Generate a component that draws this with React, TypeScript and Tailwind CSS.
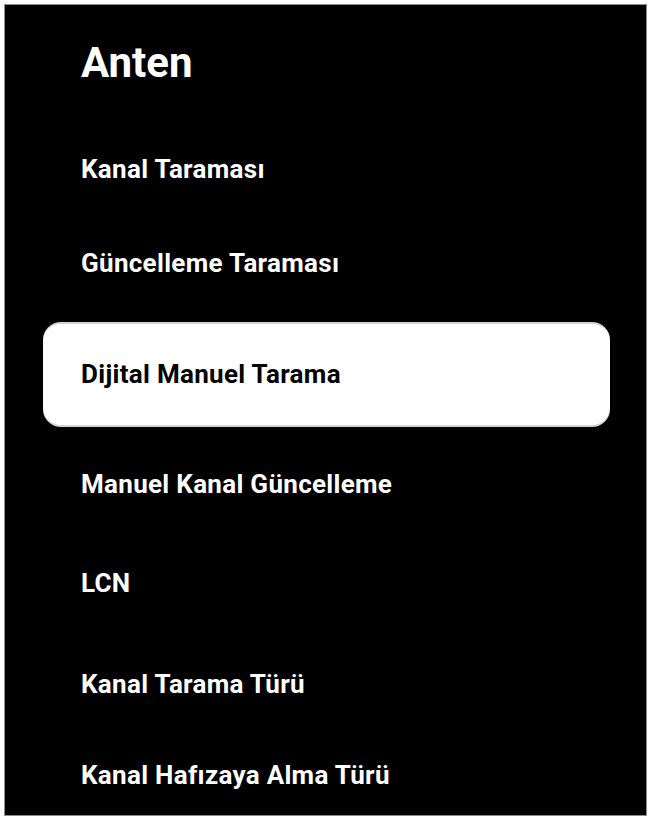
import React from 'react';

const items = [
  { label: 'Kanal Taraması', mt: 'mt-[35px]' },
  { label: 'Güncelleme Taraması', mt: 'mt-[34px]' },
  { label: 'Dijital Manuel Tarama', mt: 'mt-[29px]', active: true },
  { label: 'Manuel Kanal Güncelleme', mt: 'mt-[27px]' },
  { label: 'LCN', mt: 'mt-[39px]' },
  { label: 'Kanal Tarama Türü', mt: 'mt-[41px]' },
  { label: 'Kanal Hafızaya Alma Türü', mt: 'mt-[31px]' },
];

function App() {
  return (
    <div className="min-h-screen bg-white p-[4px]" style={{ fontFamily: 'Roboto, "Liberation Sans", sans-serif' }}>
      <div className="h-[812px] bg-black border border-[#8c8c8c] pt-[37px] pl-[38px] pr-[36px] overflow-hidden">
        <h1 className="pl-[38px] text-[42px] leading-none font-bold text-white">Anten</h1>
        <ul className="mt-[55px]">
          {items.map((item) =>
            item.active ? (
              <li
                key={item.label}
                className={`${item.mt} h-[105px] flex items-center pl-[38px] bg-white rounded-[18px] border-y-2 border-[#d4d4d4] text-[26px] tracking-[0.3px] font-bold text-black`}
              >
                {item.label}
              </li>
            ) : (
              <li
                key={item.label}
                className={`${item.mt} h-[60px] flex items-center pl-[38px] text-[26px] tracking-[0.3px] font-bold text-white`}
              >
                {item.label}
              </li>
            )
          )}
        </ul>
      </div>
    </div>
  );
}

export default App;
